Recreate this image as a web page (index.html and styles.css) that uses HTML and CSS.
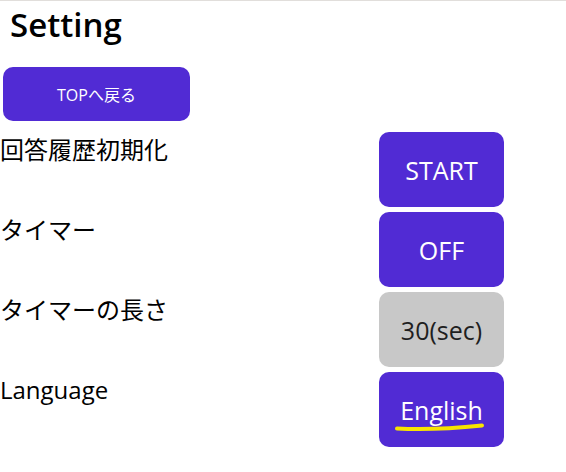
FILE: index.html
```html
<!DOCTYPE html>
<html lang="ja">
<head>
<meta charset="utf-8">
<title>Setting</title>
<link rel="stylesheet" href="styles.css">
</head>
<body>
<div class="page">
  <h1 class="title">Setting</h1>
  <button class="top-btn">TOPへ戻る</button>
  <div class="settings">
    <div class="row">
      <div class="label">回答履歴初期化</div>
      <button class="btn primary">START</button>
    </div>
    <div class="row">
      <div class="label">タイマー</div>
      <button class="btn primary">OFF</button>
    </div>
    <div class="row">
      <div class="label">タイマーの長さ</div>
      <button class="btn disabled">30(sec)</button>
    </div>
    <div class="row">
      <div class="label">Language</div>
      <button class="btn primary lang">English
        <svg class="scribble" width="125" height="75" viewBox="0 0 125 75">
          <path d="M18 56.5 Q55 58.5 103 53.5" fill="none" stroke="#f8e400" stroke-width="4" stroke-linecap="round"/>
        </svg>
      </button>
    </div>
  </div>
</div>
</body>
</html>
```
FILE: styles.css
```css
html, body {
  margin: 0;
  padding: 0;
  background: #ffffff;
}
body {
  border-top: 1px solid #e1dedb;
  font-family: "Open Sans", "Noto Sans CJK JP", sans-serif;
  color: #000;
}
.page {
  display: flex;
  flex-direction: column;
  align-items: flex-start;
}
.title {
  margin: 2px 0 0 10px;
  font-size: 33px;
  font-weight: 600;
  line-height: 44px;
}
.top-btn {
  margin: 20px 0 0 3px;
  width: 187px;
  height: 54px;
  border: none;
  border-radius: 10px;
  background: #512bd4;
  color: #fff;
  font-family: "Open Sans", "Noto Sans CJK JP", sans-serif;
  font-size: 16px;
  padding: 0;
}
.settings {
  margin-top: 11px;
  display: flex;
  flex-direction: column;
  gap: 5px;
}
.row {
  display: grid;
  grid-template-columns: 379px 125px;
  align-items: start;
}
.label {
  padding-top: 2px;
  font-size: 24px;
  line-height: 32px;
  color: #000;
}
.btn {
  position: relative;
  width: 125px;
  height: 75px;
  border: none;
  border-radius: 10px;
  font-family: "Open Sans", "Noto Sans CJK JP", sans-serif;
  font-size: 25px;
  padding: 0;
}
.primary {
  background: #512bd4;
  color: #fff;
}
.disabled {
  background: #c8c8c8;
  color: #1f1f1f;
}
.scribble {
  position: absolute;
  left: 0;
  top: 0;
  pointer-events: none;
}
```
